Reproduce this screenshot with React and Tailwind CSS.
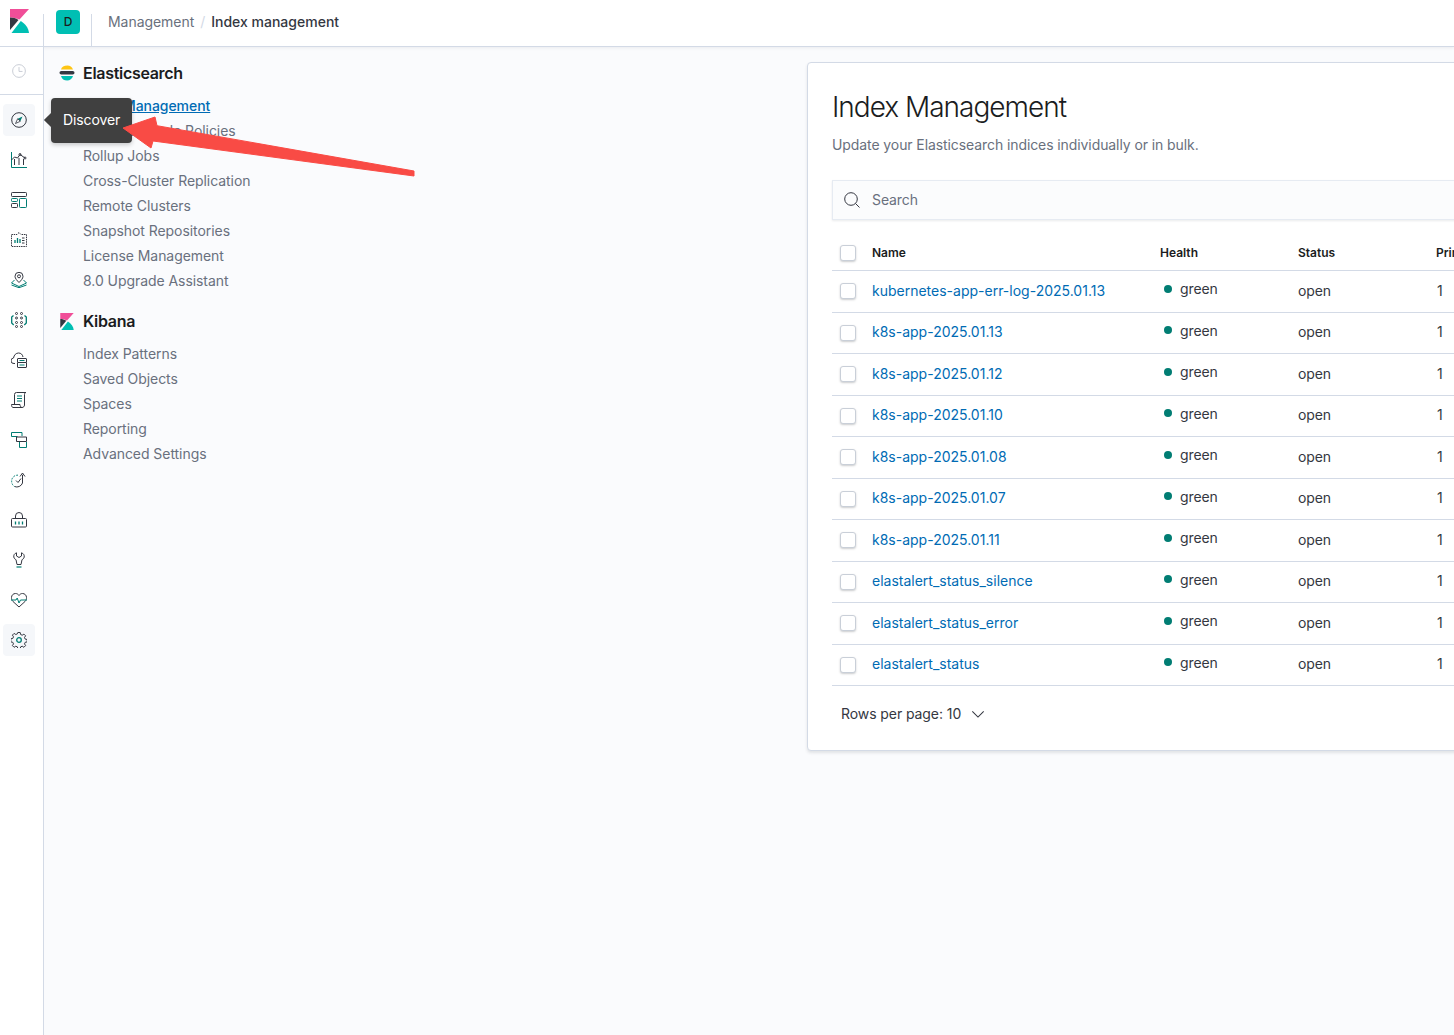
const esLinks = [
  "Index Management",
  "Index Lifecycle Policies",
  "Rollup Jobs",
  "Cross-Cluster Replication",
  "Remote Clusters",
  "Snapshot Repositories",
  "License Management",
  "8.0 Upgrade Assistant",
];
const kibanaLinks = ["Index Patterns", "Saved Objects", "Spaces", "Reporting", "Advanced Settings"];
const indices = [
  "kubernetes-app-err-log-2025.01.13",
  "k8s-app-2025.01.13",
  "k8s-app-2025.01.12",
  "k8s-app-2025.01.10",
  "k8s-app-2025.01.08",
  "k8s-app-2025.01.07",
  "k8s-app-2025.01.11",
  "elastalert_status_silence",
  "elastalert_status_error",
  "elastalert_status",
];

const DARK = "#343741";
const TEAL = "#017d73";

function KibanaLogo({ className }) {
  return (
    <svg className={className} viewBox="0 0 19 24">
      <path d="M0 0h19L9.500 10.500C6.500 9.200 3.300 8.500 0 8.500z" fill="#f04e98" />
      <path d="M0 8.500c3 0 6 .7 8.500 2.500L0 21z" fill="#343741" />
      <path d="M10.800 12L1.500 24H19c-.5-5-3.500-9-8.200-12z" fill="#00bfb3" />
    </svg>
  );
}

function ElasticLogo() {
  return (
    <svg className="w-4 h-4" viewBox="0 0 16 16">
      <path d="M2 4.500C2.500 2 5 0.500 8.500 0.500c2.500 0 4.500 1.500 5.500 4z" fill="#fec514" />
      <rect x="0.500" y="6" width="15" height="3.600" rx="1.800" fill="#343741" />
      <path d="M2 11h12c-1 2.800-3 4.500-5.800 4.500C5 15.500 2.800 14 2 11z" fill="#00bfb3" />
    </svg>
  );
}

function NavSvg({ children }) {
  return (
    <svg className="w-4 h-4" viewBox="0 0 16 16" fill="none" stroke={DARK} strokeWidth="1">
      {children}
    </svg>
  );
}

const navIcons = [
  // discover
  <NavSvg key="discover">
    <circle cx="8" cy="8" r="7.300" />
    <path d="M11.500 4.500L9.300 9.300 6.700 6.700z" fill={TEAL} stroke="none" />
    <path d="M4.500 11.500L6.700 6.700 9.300 9.300z" stroke={DARK} strokeWidth="0.800" />
  </NavSvg>,
  // visualize
  <NavSvg key="visualize">
    <path d="M0.500 0v15.500h15.500" stroke={TEAL} />
    <path d="M3.500 13V7M8 13V6M12.500 13V7" />
    <path d="M0.500 8l3-3 3 1L9 2.500 14 6" />
    <circle cx="9" cy="2.500" r="1" />
    <circle cx="14" cy="6" r="1" />
  </NavSvg>,
  // dashboard
  <NavSvg key="dashboard">
    <rect x="0.500" y="0.500" width="15" height="4" rx="0.800" />
    <rect x="0.500" y="6.500" width="6" height="3" rx="0.800" stroke={TEAL} />
    <rect x="0.500" y="11.500" width="6" height="4" rx="0.800" />
    <rect x="8.500" y="6.500" width="7" height="9" rx="0.800" stroke={TEAL} />
  </NavSvg>,
  // canvas
  <NavSvg key="canvas">
    <path d="M8 0.500L6 2.500H0.500v12h15v-12H10z" strokeDasharray="1.500 0.800" />
    <path d="M4 11V8M6.500 11V6M9 11V7" stroke={TEAL} strokeWidth="1.300" />
    <path d="M11 6h2.500M11 8.500h2.500M11 11h2.500" />
  </NavSvg>,
  // maps
  <NavSvg key="maps">
    <path d="M8 10.500C6 8.500 4 6.500 4 4.300a4 4 0 0 1 8 0c0 2.200-2 4.200-4 6.200z" />
    <circle cx="8" cy="4.300" r="1.500" />
    <path d="M3.500 8L0.500 11 8 14.500l7.500-3.500-3-3" stroke={TEAL} />
    <path d="M0.500 13l7.500 2.700 7.500-2.700" stroke={TEAL} />
  </NavSvg>,
  // ml
  <NavSvg key="ml">
    <circle cx="5.500" cy="1.500" r="1" />
    <circle cx="10.500" cy="1.500" r="1" />
    <circle cx="5.500" cy="6" r="1" />
    <circle cx="10.500" cy="6" r="1" />
    <circle cx="5.500" cy="10.500" r="1" />
    <circle cx="10.500" cy="10.500" r="1" />
    <circle cx="5.500" cy="14.500" r="1" />
    <circle cx="10.500" cy="14.500" r="1" />
    <path d="M2.500 3.500L0.700 5v6l2 2M13.500 3.500L15.300 5v6l-2 2" stroke={TEAL} strokeWidth="1.300" />
  </NavSvg>,
  // infra
  <NavSvg key="infra">
    <path d="M4 11.500H3A2.700 2.700 0 0 1 2.500 6C3 3 5 1 7.500 1 10 1 11.500 2.500 12 5" />
    <rect x="6.500" y="6.500" width="9" height="4" rx="0.500" />
    <rect x="6.500" y="10.500" width="9" height="5" rx="0.500" />
    <path d="M8.500 8.500h5M8.500 13h5" stroke={TEAL} />
  </NavSvg>,
  // logs
  <NavSvg key="logs">
    <path d="M3.500 12.500V2.500a2 2 0 0 1 2-2h9.500c-1 0-1.500 1-1.500 2V13c0 1.300-1 2.500-2.500 2.500H2C1 15.500 0.500 14 0.500 12.500H9c0 1 .5 3 2 3" />
    <path d="M6 4h5M6 6.500h5M6 9h5" stroke={TEAL} />
  </NavSvg>,
  // apm
  <NavSvg key="apm">
    <path d="M0.500 4.500v-4h10.500v3.500M0.500 4.500h6" stroke={TEAL} />
    <path d="M5.500 5h10v4.500h-10z" />
    <path d="M8.500 10v5.500h7V10" stroke={TEAL} />
  </NavSvg>,
  // uptime
  <NavSvg key="uptime">
    <path d="M11.500 2.800V11a6 6 0 0 1-8 3.500" />
    <path d="M9 4.500L11.500 1 14 4.500" />
    <path d="M7 3.200a5.800 5.800 0 0 0-6.300 5.300A6 6 0 0 0 3.500 14.500" stroke={TEAL} strokeDasharray="1.800 1.200" />
    <path d="M5 8.500l2 2 3-4" />
  </NavSvg>,
  // siem
  <NavSvg key="siem">
    <rect x="0.500" y="6.500" width="15" height="8.500" rx="1" />
    <path d="M4.500 6.500V4a3.500 3.500 0 0 1 7 0v2.500" />
    <path d="M4.500 9.500v3M8 9.500v3M11.500 9.500v3" stroke={TEAL} strokeWidth="1.300" />
  </NavSvg>,
  // dev tools
  <NavSvg key="dev">
    <path d="M5.500 0.800C3.500 1.500 2.500 3 2.800 5c.3 1.500 1.200 2.200 2.200 2.700L6 12.500h4l1-4.800c1-.5 1.900-1.200 2.200-2.700.3-2-.7-3.500-2.700-4.200v3.200L8 5.500 5.500 4z" />
    <path d="M5.500 15h5" stroke={TEAL} strokeWidth="1.200" />
  </NavSvg>,
  // monitoring
  <NavSvg key="monitoring">
    <path d="M2 9.500C0.700 8 0.500 7 0.500 5.500 0.500 3.200 2.300 1.500 4.500 1.500c1.500 0 2.700.7 3.500 2 .8-1.300 2-2 3.500-2 2.200 0 4 1.700 4 4 0 1.500-.2 2.500-1.500 4L8 15z" />
    <path d="M0 8h5l1.200-2 1.800 5 1.500-3h6.500" stroke={TEAL} />
  </NavSvg>,
  // management
  <NavSvg key="management">
    <path d="M6.800 0.500h2.400l.4 2 1.600.7 1.700-1.100 1.700 1.700-1.100 1.700.7 1.600 2 .4v2.400l-2 .4-.7 1.600 1.100 1.700-1.700 1.700-1.700-1.100-1.600.7-.4 2H6.800l-.4-2-1.600-.7-1.700 1.100-1.700-1.700 1.100-1.700-.7-1.600-2-.4V6.800l2-.4.7-1.600-1.100-1.700 1.700-1.700 1.700 1.100 1.600-.7z" />
    <circle cx="8" cy="8" r="2.300" stroke={TEAL} strokeWidth="1.300" />
  </NavSvg>,
];

function Checkbox() {
  return (
    <span className="block w-4 h-4 rounded-[3px] border border-[#c9cfd8] bg-white shadow-[0_1px_2px_rgba(52,55,65,0.25)]" />
  );
}

function SideSection({ logo, title, links }) {
  return (
    <section>
      <div className="flex items-center gap-2 h-6">
        <span className="flex justify-center w-4 shrink-0">{logo}</span>
        <h2 className="text-[16px] font-semibold text-[#1a1c21] leading-6 tracking-[-0.3px]">{title}</h2>
      </div>
      <ul className="mt-2 pl-6 tracking-[-0.06px]">
        {links.map((name) => (
          <li key={name} className="h-[25px] text-[14px] leading-[25px] text-[#69707d]">
            {name === "Index Management" ? (
              <a className="text-[#006bb4] underline font-medium">{name}</a>
            ) : (
              name
            )}
          </li>
        ))}
      </ul>
    </section>
  );
}

function IndexRow({ name }) {
  return (
    <div className="grid grid-cols-[40px_288px_138px_138px_100px] items-center h-[41.5px] border-b border-[#d3dae6] text-[14px] text-[#343741]">
      <div className="pl-2">
        <Checkbox />
      </div>
      <a className="text-[#006bb4] -mt-[2px]">{name}</a>
      <div className="flex items-center gap-2 pl-1 -mt-[5px] tracking-[-0.1px]">
        <span className="w-2 h-2 rounded-full bg-[#017d73]" />
        <span>green</span>
      </div>
      <div className="-mt-[2px] tracking-[-0.1px]">open</div>
      <div className="-mt-[2px] pl-[1px]">1</div>
    </div>
  );
}

export default function App() {
  return (
    <div className="relative w-[1454px] h-[1035px] overflow-hidden bg-[#fafbfd] font-['Inter','Liberation_Sans',sans-serif]">
      <header className="flex h-[47px] bg-white border-b border-[#d3dae6] shadow-[0_1px_3px_rgba(52,55,65,0.08)]">
        <div className="flex w-[44px] shrink-0">
          <div className="flex flex-1 items-center pl-[10px] pb-[4px]">
            <KibanaLogo className="w-[19px] h-[24px]" />
          </div>
          <span className="self-end w-px h-[32px] bg-[#d3dae6]" />
        </div>
        <div className="flex w-[48px] shrink-0">
          <div className="flex flex-1 items-center pl-3 pb-[2px]">
            <span className="flex items-center justify-center w-6 h-6 rounded-[4px] bg-[#00bfb3] text-[12px] font-medium text-[#1a1c21]">
              D
            </span>
          </div>
          <span className="self-end w-px h-[32px] bg-[#d3dae6]" />
        </div>
        <nav className="flex items-center pl-4 pb-[3px] text-[14px]">
          <span className="text-[#69707d] tracking-[-0.05px]">Management</span>
          <span className="mx-[6px] text-[#d3dae6]">/</span>
          <span className="text-[#343741] font-medium">Index management</span>
        </nav>
      </header>

      <div className="flex h-[988px]">
        <aside className="w-[44px] shrink-0 bg-white border-r border-[#d3dae6]">
          <div className="flex items-center pl-[12px] h-[48px] border-b border-[#d3dae6]">
            <svg className="w-[14px] h-[14px]" viewBox="0 0 16 16" fill="none" stroke="#c2c7d0" strokeWidth="1">
              <circle cx="8" cy="8" r="7.300" />
              <path d="M8 3.500V8.500h4" />
            </svg>
          </div>
          <div className="flex flex-col pl-[3px] pt-[5px]">
            {navIcons.map((icon, i) => (
              <div
                key={i}
                className={`flex items-center justify-center w-8 h-8 my-1 rounded-[4px] ${
                  i === 0 || i === navIcons.length - 1 ? "bg-[#f5f7fa]" : ""
                }`}
              >
                {icon}
              </div>
            ))}
          </div>
        </aside>

        <div className="w-[763px] shrink-0 pl-[15px] pt-[14px]">
          <SideSection logo={<ElasticLogo />} title="Elasticsearch" links={esLinks} />
          <div className="mt-4">
            <SideSection logo={<KibanaLogo className="w-[14px] h-[17px]" />} title="Kibana" links={kibanaLinks} />
          </div>
        </div>

        <main className="mt-[15px] w-[800px] h-[689px] shrink-0 bg-white border border-[#d3dae6] rounded-[4px] shadow-[0_2px_3px_rgba(52,55,65,0.12)] pl-6 pt-[26px]">
          <h1 className="text-[28px] font-light leading-9 text-[#1a1c21] tracking-[-1px]">Index Management</h1>
          <p className="mt-[10px] text-[14px] leading-5 text-[#69707d] tracking-[-0.09px]">
            Update your Elasticsearch indices individually or in bulk.
          </p>
          <div className="flex items-center gap-3 mt-[25px] h-10 pl-[11px] pb-[1px] bg-[#fbfcfd] border border-[#e6ebf2] shadow-[0_1px_2px_rgba(52,55,65,0.1)] text-[14px] text-[#69707d]">
            <svg className="w-4 h-4" viewBox="0 0 16 16" fill="none" stroke="#343741" strokeWidth="1">
              <circle cx="7" cy="7" r="6.300" />
              <path d="M11.500 11.500L15.500 15.500" />
            </svg>
            <span className="tracking-[-0.1px]">Search</span>
          </div>

          <div className="mt-[13px]">
            <div className="grid grid-cols-[40px_288px_138px_138px_100px] items-center h-[38px] pt-[2px] border-b border-[#d3dae6] text-[12px] font-semibold text-[#1a1c21]">
              <div className="pl-2">
                <Checkbox />
              </div>
              <div>Name</div>
              <div>Health</div>
              <div>Status</div>
              <div>Primaries</div>
            </div>
            {indices.map((name) => (
              <IndexRow key={name} name={name} />
            ))}
          </div>

          <div className="flex items-center gap-[10px] mt-[18px] pl-[9px] text-[14px] leading-5 text-[#343741] tracking-[-0.08px]">
            <span>Rows per page: 10</span>
            <svg className="w-[14px] h-[14px]" viewBox="0 0 16 16" fill="none" stroke="#343741" strokeWidth="1.200">
              <path d="M1.500 5L8 11.500 14.500 5" />
            </svg>
          </div>
        </main>
      </div>

      {/* tooltip over the nav */}
      <div className="absolute left-[51px] top-[98px] flex items-center h-[45px] w-[81px] pl-3 pb-[2px] rounded-[4px] bg-[#404040] text-[14px] text-white tracking-[-0.1px] shadow-[0_2px_4px_rgba(0,0,0,0.2)]">
        <span className="absolute -left-[5px] top-[17px] w-[10px] h-[10px] rotate-45 bg-[#404040]" />
        <span className="relative">Discover</span>
      </div>

      {/* red annotation arrow */}
      <svg className="absolute left-[120px] top-[112px] w-[300px] h-[72px]" viewBox="0 0 300 72">
        <path d="M3 16L35 5 37 13.700 294 59 294 64 33 29 31 36z" fill="#f94b45" stroke="#f94b45" strokeWidth="1" strokeLinejoin="round" />
      </svg>
    </div>
  );
}
